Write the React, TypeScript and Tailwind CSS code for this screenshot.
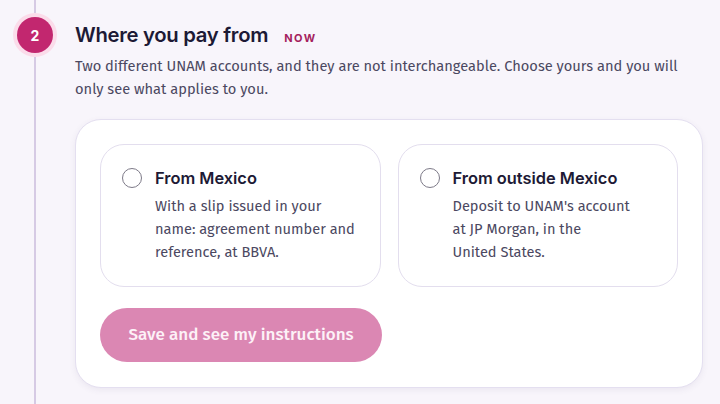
import React from "react";

const body = { fontFamily: '"Fira Sans", "Open Sans", "Noto Sans", sans-serif' };
const head = { fontFamily: '"Inter", "Noto Sans", sans-serif' };

function Radio() {
  return <div className="mt-[1px] h-5 w-5 shrink-0 rounded-full border-[1.5px] border-[#7d7a88] bg-white" />;
}

function Option({ title, lines }: { title: string; lines: string[] }) {
  return (
    <div className="flex h-[143px] flex-1 gap-[13px] rounded-[24px] border border-[#e3deee] bg-white px-[21px] pt-[22px]">
      <Radio />
      <div>
        <div className="text-[16.4px] font-semibold leading-[22px] text-[#1d1a35]" style={head}>{title}</div>
        <div className="mt-[6px] text-[14.6px] leading-[23px] text-[#4b4861]" style={body}>
          {lines.map((l, i) => (
            <div key={i}>{l}</div>
          ))}
        </div>
      </div>
    </div>
  );
}

export default function App() {
  return (
    <div className="flex h-[404px] w-[720px] overflow-hidden bg-[#f8f5fb]">
      <div className="flex w-[70px] shrink-0 flex-col items-center">
        <div className="h-[13px] w-[2px] bg-[#d6cae4]" />
        <div className="flex h-[44px] w-[44px] items-center justify-center rounded-full bg-[#fbdcea]">
          <div className="flex h-9 w-9 items-center justify-center rounded-full bg-[#c2276f] text-[14px] font-bold text-white" style={head}>
            2
          </div>
        </div>
        <div className="w-[2px] flex-1 bg-[#d6cae4]" />
      </div>
      <div className="flex-1 pl-[5px] pr-[17px] pt-[21px]">
        <div className="flex items-baseline gap-4">
          <h2 className="text-[20.3px] font-semibold leading-[28px] tracking-[-0.3px] text-[#1d1a35]" style={head}>Where you pay from</h2>
          <span className="text-[11px] font-bold tracking-[1.5px] text-[#a51f5e]" style={head}>NOW</span>
        </div>
        <p className="mt-[6px] text-[14.65px] leading-[23px] text-[#4b4861]" style={body}>
          Two different UNAM accounts, and they are not interchangeable. Choose yours and you will
          <br />
          only see what applies to you.
        </p>
        <div className="mt-[18px] rounded-[26px] border border-[#e4dff0] bg-white px-6 pb-[25px] pt-6 shadow-[0_2px_6px_rgba(80,60,120,0.08)]">
          <div className="flex gap-[17px]">
            <Option title="From Mexico" lines={["With a slip issued in your", "name: agreement number and", "reference, at BBVA."]} />
            <Option title="From outside Mexico" lines={["Deposit to UNAM's account", "at JP Morgan, in the", "United States."]} />
          </div>
          <button className="mt-[21px] h-[54px] w-[282px] rounded-full bg-[#db87b3] text-[17px] font-medium text-[#fdf1f7]" style={body}>
            Save and see my instructions
          </button>
        </div>
      </div>
    </div>
  );
}
